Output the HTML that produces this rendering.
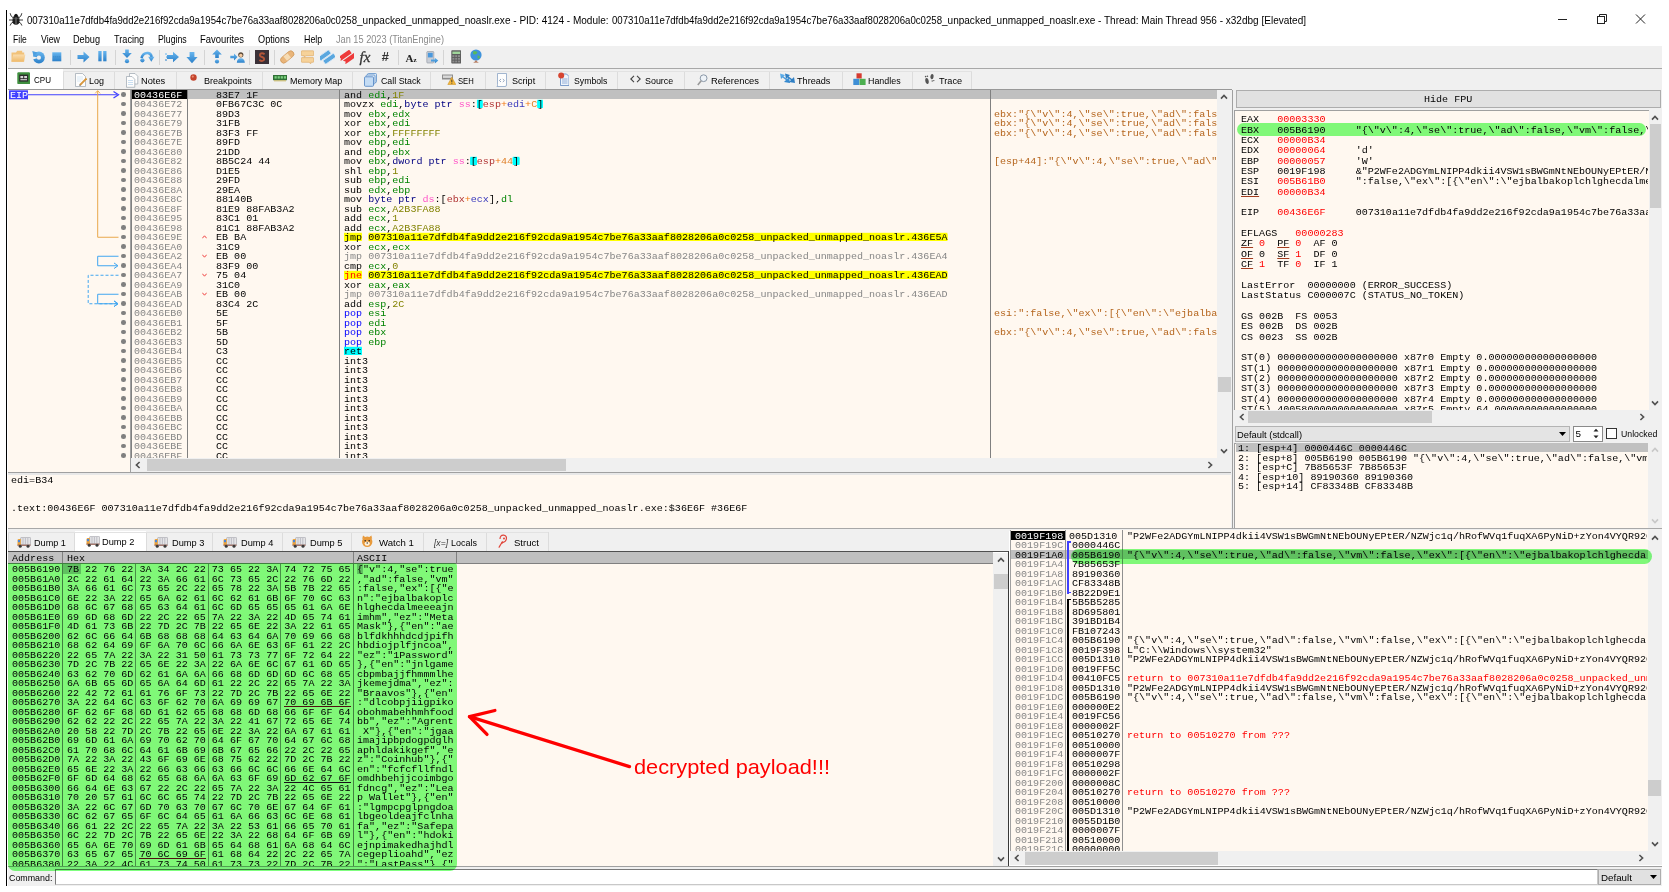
<!DOCTYPE html>
<html><head><meta charset="utf-8"><title>x32dbg</title>
<style>
html,body{margin:0;padding:0;background:#fff;}
body{width:1669px;height:892px;overflow:hidden;position:relative;font-family:"Liberation Sans",sans-serif;}
div,span.s,span.m,svg{position:absolute;}
i{font-style:normal;}
.s{font-family:"Liberation Sans",sans-serif;white-space:pre;height:14px;line-height:14px;transform-origin:0 50%;}
.m{font-family:"Liberation Mono",monospace;font-size:9.0px;white-space:pre;height:9.5px;line-height:9.5px;transform:scaleX(1.11741);transform-origin:0 0;}
.m i{display:inline-block;height:9.5px;line-height:9.5px;vertical-align:top;}
.clip{overflow:hidden;}
</style></head><body>
<div style="left:6px;top:10px;width:1px;height:876px;background:#000;"></div>
<div style="left:8px;top:46px;width:1653.5px;height:22px;background:#f0f0f0;"></div>
<div style="left:8px;top:68px;width:1653.5px;height:1px;background:#a8a8a8;"></div>
<div style="left:8px;top:69px;width:1653.5px;height:20.7px;background:#f0f0f0;"></div>
<svg style="left:8.5px;top:12.3px" width="14" height="14" viewBox="0 0 14 14">
<g stroke="#3a3a3a" stroke-width="1" fill="none" stroke-linecap="round">
<path d="M3.8,5.6 Q1.6,4.6 1.2,1.6 M10.2,5.6 Q12.4,4.6 12.8,1.6 M3.4,8 H0.4 M10.6,8 H13.6 M3.8,10.2 Q1.8,10.8 1.2,13.2 M10.2,10.2 Q12.2,10.8 12.8,13.2"/></g>
<ellipse cx="7" cy="8.4" rx="3.6" ry="4.3" fill="#1d1d1d"/>
<path d="M4.4,4.8 Q7,-1.2 9.6,4.8 Z" fill="#111"/>
<rect x="6.55" y="5.2" width="0.9" height="7" fill="#8a8a8a"/>
<path d="M4,6.4 H10" stroke="#666" stroke-width="0.6"/>
</svg>
<span class="s" style="left:27px;top:12.5px;font-size:11px;color:#000;transform:scaleX(0.8763);">007310a11e7dfdb4fa9dd2e216f92cda9a1954c7be76a33aaf8028206a0c0258</span>
<span class="s" style="left:357.3px;top:12.5px;font-size:11px;color:#000;transform:scaleX(0.9124);">_unpacked_unmapped_noaslr.exe - PID: 4124 - Module: </span>
<span class="s" style="left:611.7px;top:12.5px;font-size:11px;color:#000;transform:scaleX(0.8763);">007310a11e7dfdb4fa9dd2e216f92cda9a1954c7be76a33aaf8028206a0c0258</span>
<span class="s" style="left:942px;top:12.5px;font-size:11px;color:#000;transform:scaleX(0.9111);">_unpacked_unmapped_noaslr.exe - Thread: Main Thread 956 - x32dbg [Elevated]</span>
<svg style="left:1550px;top:8px" width="105" height="24" viewBox="0 0 105 24">
<g stroke="#222" stroke-width="1" fill="none">
<path d="M8,11.5 H17"/>
<rect x="47.5" y="8.5" width="7" height="7"/><path d="M49.5,8.5 V6.5 H56.5 V13.5 H54.5"/>
<path d="M86,6.5 L95,15.5 M95,6.5 L86,15.5"/>
</g></svg>
<span class="s" style="left:13.1px;top:32px;font-size:10.8px;color:#000;transform:scaleX(0.7930);">File</span>
<span class="s" style="left:41px;top:32px;font-size:10.8px;color:#000;transform:scaleX(0.8142);">View</span>
<span class="s" style="left:73.2px;top:32px;font-size:10.8px;color:#000;transform:scaleX(0.8484);">Debug</span>
<span class="s" style="left:114px;top:32px;font-size:10.8px;color:#000;transform:scaleX(0.8481);">Tracing</span>
<span class="s" style="left:157.8px;top:32px;font-size:10.8px;color:#000;transform:scaleX(0.8103);">Plugins</span>
<span class="s" style="left:200px;top:32px;font-size:10.8px;color:#000;transform:scaleX(0.8727);">Favourites</span>
<span class="s" style="left:258.2px;top:32px;font-size:10.8px;color:#000;transform:scaleX(0.8517);">Options</span>
<span class="s" style="left:303.5px;top:32px;font-size:10.8px;color:#000;transform:scaleX(0.8239);">Help</span>
<span class="s" style="left:336px;top:32px;font-size:10.8px;color:#8a8a8a;transform:scaleX(0.8512);">Jan 15 2023 (TitanEngine)</span>
<div style="left:69.9px;top:49.5px;width:1px;height:15px;background:#d4d4d4;"></div>
<div style="left:114.8px;top:49.5px;width:1px;height:15px;background:#d4d4d4;"></div>
<div style="left:159.1px;top:49.5px;width:1px;height:15px;background:#d4d4d4;"></div>
<div style="left:204px;top:49.5px;width:1px;height:15px;background:#d4d4d4;"></div>
<div style="left:249px;top:49.5px;width:1px;height:15px;background:#d4d4d4;"></div>
<div style="left:273.8px;top:49.5px;width:1px;height:15px;background:#d4d4d4;"></div>
<div style="left:397.9px;top:49.5px;width:1px;height:15px;background:#d4d4d4;"></div>
<div style="left:442.8px;top:49.5px;width:1px;height:15px;background:#d4d4d4;"></div>
<div style="left:8px;top:69px;width:55px;height:21px;background:#fff;"></div>
<div style="left:62.5px;top:71px;width:1px;height:18px;background:#dcdcdc;"></div>
<div style="left:113.5px;top:71px;width:1px;height:18px;background:#dcdcdc;"></div>
<div style="left:176.3px;top:71px;width:1px;height:18px;background:#dcdcdc;"></div>
<div style="left:262.2px;top:71px;width:1px;height:18px;background:#dcdcdc;"></div>
<div style="left:352.4px;top:71px;width:1px;height:18px;background:#dcdcdc;"></div>
<div style="left:430px;top:71px;width:1px;height:18px;background:#dcdcdc;"></div>
<div style="left:484.5px;top:71px;width:1px;height:18px;background:#dcdcdc;"></div>
<div style="left:545.3px;top:71px;width:1px;height:18px;background:#dcdcdc;"></div>
<div style="left:617px;top:71px;width:1px;height:18px;background:#dcdcdc;"></div>
<div style="left:683.7px;top:71px;width:1px;height:18px;background:#dcdcdc;"></div>
<div style="left:768.5px;top:71px;width:1px;height:18px;background:#dcdcdc;"></div>
<div style="left:841.5px;top:71px;width:1px;height:18px;background:#dcdcdc;"></div>
<div style="left:911.5px;top:71px;width:1px;height:18px;background:#dcdcdc;"></div>
<div style="left:971.1px;top:71px;width:1px;height:18px;background:#dcdcdc;"></div>
<div style="left:63px;top:70.5px;width:908.6px;height:1px;background:#e2e2e2;"></div>
<span class="s" style="left:34px;top:73px;font-size:9.9px;color:#000;transform:scaleX(0.8133);">CPU</span>
<span class="s" style="left:89px;top:74px;font-size:9.9px;color:#000;transform:scaleX(0.9082);">Log</span>
<span class="s" style="left:141.4px;top:74px;font-size:9.9px;color:#000;transform:scaleX(0.9397);">Notes</span>
<span class="s" style="left:203.7px;top:74px;font-size:9.9px;color:#000;transform:scaleX(0.9163);">Breakpoints</span>
<span class="s" style="left:290px;top:74px;font-size:9.9px;color:#000;transform:scaleX(0.9072);">Memory Map</span>
<span class="s" style="left:380.5px;top:74px;font-size:9.9px;color:#000;transform:scaleX(0.8931);">Call Stack</span>
<span class="s" style="left:458.4px;top:74px;font-size:9.9px;color:#000;transform:scaleX(0.7762);">SEH</span>
<span class="s" style="left:512.3px;top:74px;font-size:9.9px;color:#000;transform:scaleX(0.9168);">Script</span>
<span class="s" style="left:574px;top:74px;font-size:9.9px;color:#000;transform:scaleX(0.8825);">Symbols</span>
<span class="s" style="left:645.2px;top:74px;font-size:9.9px;color:#000;transform:scaleX(0.9023);">Source</span>
<span class="s" style="left:711.4px;top:74px;font-size:9.9px;color:#000;transform:scaleX(0.9502);">References</span>
<span class="s" style="left:797px;top:74px;font-size:9.9px;color:#000;transform:scaleX(0.9225);">Threads</span>
<span class="s" style="left:868.3px;top:74px;font-size:9.9px;color:#000;transform:scaleX(0.9003);">Handles</span>
<span class="s" style="left:939.4px;top:74px;font-size:9.9px;color:#000;transform:scaleX(0.9263);">Trace</span>
<svg width="0" height="0" style="left:0;top:0"><defs><linearGradient id="gb" x1="0" y1="0" x2="0" y2="1"><stop offset="0" stop-color="#68b6ef"/><stop offset="1" stop-color="#2b80c9"/></linearGradient><linearGradient id="gf" x1="0" y1="0" x2="0" y2="1"><stop offset="0" stop-color="#f9dcae"/><stop offset="1" stop-color="#efb968"/></linearGradient></defs></svg>
<svg style="left:11px;top:50.2px" width="15" height="13" viewBox="0 0 15 13"><path d="M0.5,2.6 H5 L6.2,0.8 H11.2 V2.6 H13.2 V11.6 H0.5 Z" fill="#f1c27a"/><path d="M0.4,11.8 L2.2,4.6 H14.4 L12.8,11.8 Z" fill="url(#gf)"/></svg>
<svg style="left:31.5px;top:49.7px" width="13" height="14" viewBox="0 0 13 14"><circle cx="6.9" cy="7.5" r="5.9" fill="url(#gb)"/><circle cx="6.9" cy="7.7" r="2.1" fill="#f0f0f0"/><path d="M6.9,7.7 L0,6.2 L0.6,9.4 Z" fill="#f0f0f0"/><path d="M0.3,1 L5.4,2.4 L1.6,6.8 Z" fill="#4d9fe0"/></svg>
<svg style="left:52.3px;top:51.8px" width="10" height="10" viewBox="0 0 10 10"><rect x="0.3" y="0.3" width="9" height="9" fill="url(#gb)"/><path d="M1.3,4.8 H8.3" stroke="#2b7cbd" stroke-width="0.8" stroke-dasharray="1,1"/></svg>
<svg style="left:76.5px;top:50.7px" width="13" height="12" viewBox="0 0 13 12"><path d="M0.5,4 H6.5 V0.5 L12.5,6 L6.5,11.5 V8 H0.5 Z" fill="url(#gb)"/></svg>
<svg style="left:97.5px;top:51.2px" width="9" height="10.5" viewBox="0 0 9 10.5"><rect x="0.3" y="0" width="3.3" height="10.3" fill="url(#gb)"/><rect x="5.2" y="0" width="3.3" height="10.3" fill="url(#gb)"/></svg>
<svg style="left:122px;top:49.2px" width="10" height="15" viewBox="0 0 10 15"><path d="M3.2,0.5 H6.8 V4 H9.8 L5,9 L0.2,4 H3.2 Z" fill="url(#gb)"/><circle cx="5" cy="12.2" r="2.1" fill="url(#gb)"/></svg>
<svg style="left:140px;top:51.2px" width="14.5" height="11.5" viewBox="0 0 14.5 11.5"><path d="M1.5,7 Q3,1.5 8,2 Q11.5,2.6 11.5,6" fill="none" stroke="url(#gb)" stroke-width="2.6"/><path d="M8.2,5.8 H14.4 L11.3,10.8 Z" fill="url(#gb)"/><circle cx="2.4" cy="9.3" r="2.1" fill="url(#gb)"/></svg>
<svg style="left:165px;top:50.7px" width="14.5" height="12" viewBox="0 0 14.5 12"><path d="M2,4 H8 V0.8 L14,6 L8,11.2 V8 H2 Z" fill="url(#gb)"/><path d="M0,3 h2 M1,6 h2 M0,9 h2" stroke="url(#gb)" stroke-width="1"/></svg>
<svg style="left:186px;top:49.7px" width="12" height="14" viewBox="0 0 12 14"><path d="M3.6,2 H8.4 V7 H11.6 L6,13.2 L0.4,7 H3.6 Z" fill="url(#gb)"/><path d="M4,0.5 h1.5 M7,0.5 h1.5" stroke="url(#gb)" stroke-width="1"/></svg>
<svg style="left:211.5px;top:49.2px" width="10" height="15" viewBox="0 0 10 15"><path d="M3.2,9 H6.8 V5.5 H9.8 L5,0.5 L0.2,5.5 H3.2 Z" fill="url(#gb)"/><circle cx="5" cy="12.5" r="2.1" fill="url(#gb)"/></svg>
<svg style="left:229.5px;top:50.7px" width="15" height="12" viewBox="0 0 15 12"><path d="M0.3,4.8 H4 V2.5 L7.5,6 L4,9.5 V7.2 H0.3 Z" fill="url(#gb)"/><circle cx="10.8" cy="3.8" r="2.6" fill="#5b4a3a"/><circle cx="10.8" cy="4.4" r="1.7" fill="#f3c9a0"/><path d="M6.8,11.8 Q7,7.3 10.8,7.3 Q14.6,7.3 14.8,11.8 Z" fill="url(#gb)"/></svg>
<svg style="left:255px;top:49.7px" width="14.2" height="14" viewBox="0 0 14.2 14"><rect width="14.2" height="14" fill="#3b3138"/><path d="M9.6,4.2 Q7,2.2 5.2,4 Q4,6 7,7 Q10,8 8.8,10.2 Q7,12 4.4,10" fill="none" stroke="#b4553a" stroke-width="1.9"/></svg>
<svg style="left:280px;top:49.7px" width="14.5" height="14" viewBox="0 0 14.5 14"><g transform="rotate(-40 7.2 7)"><rect x="-0.5" y="3.8" width="15.5" height="6.4" rx="3.2" fill="#e9b57a" stroke="#c98f4f" stroke-width="0.6"/><rect x="4.6" y="4.2" width="5.2" height="5.6" fill="#f6dcb5"/></g></svg>
<svg style="left:300.5px;top:49.7px" width="13" height="14" viewBox="0 0 13 14"><path d="M1,0.8 H12 Q12.7,0.8 12.7,1.5 V5 Q12.7,5.7 12,5.7 H5 L3.2,7.2 V5.7 H1 Q0.3,5.7 0.3,5 V1.5 Q0.3,0.8 1,0.8 Z" fill="#f6d29a" stroke="#dca55a" stroke-width="0.6"/><path d="M1,7.6 H12 Q12.7,7.6 12.7,8.3 V11.6 Q12.7,12.3 12,12.3 H9.8 V13.8 L8,12.3 H1 Q0.3,12.3 0.3,11.6 V8.3 Q0.3,7.6 1,7.6 Z" fill="#f6d29a" stroke="#dca55a" stroke-width="0.6"/></svg>
<svg style="left:320px;top:49.7px" width="14.5" height="14" viewBox="0 0 14.5 14"><g transform="rotate(-35 7 7)"><rect x="-0.5" y="2" width="13" height="4.6" rx="1" fill="#5aa7df" stroke="#d7e7f5" stroke-width="0.9"/><rect x="1.5" y="7.6" width="13" height="4.6" rx="1" fill="#5aa7df" stroke="#d7e7f5" stroke-width="0.9"/></g></svg>
<svg style="left:339.5px;top:49.7px" width="14.5" height="14" viewBox="0 0 14.5 14"><g transform="rotate(-35 7 7)"><path d="M-0.5,2.2 H13 V6.6 H-0.5 L1.3,4.4 Z" fill="#ee3b3b"/><path d="M1.5,7.6 H15 V12 H1.5 L3.3,9.8 Z" fill="#ee3b3b"/></g></svg>
<span class="s" style="left:359.5px;top:48.7px;font-family:'Liberation Serif',serif;font-style:italic;font-size:15px;color:#333;height:16px;line-height:16px;-webkit-text-stroke:0.3px">fx</span>
<span class="s" style="left:381.5px;top:49.2px;font-family:'Liberation Sans',sans-serif;font-style:italic;font-weight:bold;font-size:13px;color:#333;height:16px;line-height:16px;">#</span>
<span class="s" style="left:405.5px;top:49.7px;font-family:'Liberation Serif',serif;font-weight:bold;font-size:11px;color:#222;height:16px;line-height:16px;">A<i style="font-size:7px">z</i></span>
<svg style="left:426px;top:49.7px" width="12.5" height="14" viewBox="0 0 12.5 14"><rect x="0.8" y="1.5" width="7" height="11.5" rx="0.8" fill="#c9ced6" stroke="#8d949e" stroke-width="0.6"/><rect x="1.9" y="2.8" width="4.8" height="4.6" fill="#4a98dc"/><path d="M5,9.6 H8.8 V7.8 L12.3,10.6 L8.8,13.4 V11.6 H5 Z" fill="url(#gb)"/></svg>
<svg style="left:450.5px;top:49.7px" width="10.5" height="14" viewBox="0 0 10.5 14"><rect x="0.3" y="0.3" width="9.9" height="13.2" rx="0.8" fill="#5d5d5d"/><rect x="1.4" y="1.6" width="7.7" height="2.4" fill="#9fd59a"/><g fill="#8d8d8d"><rect x="1.4" y="5.2" width="2" height="1.8"/><rect x="4.2" y="5.2" width="2" height="1.8"/><rect x="7" y="5.2" width="2" height="1.8"/><rect x="1.4" y="7.9" width="2" height="1.8"/><rect x="4.2" y="7.9" width="2" height="1.8"/><rect x="7" y="7.9" width="2" height="1.8"/><rect x="1.4" y="10.6" width="2" height="1.8"/><rect x="4.2" y="10.6" width="2" height="1.8"/><rect x="7" y="10.6" width="2" height="1.8"/></g></svg>
<svg style="left:470px;top:49.2px" width="12.5" height="15" viewBox="0 0 12.5 15"><circle cx="6" cy="6" r="5.6" fill="#3f93dc"/><path d="M3,2.5 Q6,1 7.5,3.5 Q6,6 4.5,5.5 Q2.5,5 3,2.5 Z M7.5,6.5 Q10,6 10,8.5 Q8.5,10.5 7.5,9 Z" fill="#59b95b"/><path d="M3.2,13.6 Q6,11.6 8.8,13.6 Z" fill="#a0522d"/><rect x="5.5" y="11.4" width="1" height="1.6" fill="#a0522d"/></svg>
<svg style="left:16.5px;top:71.5px" width="13.5" height="12.5" viewBox="0 0 13.5 12.5"><rect x="0.3" y="0.3" width="12.9" height="11.9" rx="1.2" fill="#3f8f3f"/><rect x="2.2" y="2.6" width="9" height="7" fill="#2c2c2c"/><rect x="3.4" y="4" width="2.8" height="2.2" fill="#d8d8d8"/><rect x="7.2" y="4" width="2.8" height="2.2" fill="#d8d8d8"/><rect x="3.4" y="7" width="6.6" height="1.3" fill="#bdbdbd"/></svg>
<svg style="left:74.5px;top:73px" width="12" height="14" viewBox="0 0 12 14"><path d="M0.5,0.5 H7.5 L10.5,3.5 V13.5 H0.5 Z" fill="#fdfdfd" stroke="#9aa3ad" stroke-width="0.7"/><path d="M2,4 H8 M2,6 H8 M2,8 H6" stroke="#cfe3f3" stroke-width="0.8"/><path d="M5,12 L11.5,5.5" stroke="#d8973c" stroke-width="1.8"/><path d="M4.3,12.8 L5.8,12.4 L4.7,11.3 Z" fill="#444"/></svg>
<svg style="left:126px;top:72.5px" width="12.5" height="15" viewBox="0 0 12.5 15"><path d="M3.5,0.5 H9 L11.8,3.3 V11 H3.5 Z" fill="#fdfdfd" stroke="#9aa3ad" stroke-width="0.7"/><path d="M0.5,3.5 H6 L8.8,6.3 V14.3 H0.5 Z" fill="#fdfdfd" stroke="#9aa3ad" stroke-width="0.7"/><path d="M2,7.5 H7 M2,9.5 H7 M2,11.5 H7" stroke="#bcd7ee" stroke-width="0.8"/></svg>
<svg style="left:189.5px;top:73.5px" width="7" height="7" viewBox="0 0 7 7"><circle cx="3.5" cy="3.5" r="3.2" fill="#c4432b"/><circle cx="2.8" cy="2.6" r="1.1" fill="#e88a6e"/></svg>
<svg style="left:273px;top:75px" width="14" height="6.5" viewBox="0 0 14 6.5"><rect x="0" y="0" width="14" height="5.2" fill="#2f6f35"/><g fill="#7bd07f"><rect x="1.5" y="1.2" width="2.2" height="2.4"/><rect x="4.6" y="1.2" width="2.2" height="2.4"/><rect x="7.7" y="1.2" width="2.2" height="2.4"/><rect x="10.8" y="1.2" width="2.2" height="2.4"/></g><path d="M1,5.8 H13" stroke="#c8b560" stroke-width="1"/></svg>
<svg style="left:363.5px;top:72.5px" width="13" height="14" viewBox="0 0 13 14"><rect x="3.5" y="0.5" width="9" height="9" rx="1" fill="#dce9f7" stroke="#5d8fc9" stroke-width="0.8"/><rect x="2" y="2" width="9" height="9" rx="1" fill="#dce9f7" stroke="#5d8fc9" stroke-width="0.8"/><rect x="0.5" y="3.8" width="9" height="9.5" rx="1" fill="#c4dcf4" stroke="#4d82c2" stroke-width="0.8"/></svg>
<svg style="left:441.5px;top:74px" width="14" height="11" viewBox="0 0 14 11"><rect x="0" y="0.5" width="11" height="5" fill="#8d8d8d"/><rect x="1" y="1.5" width="9" height="2.4" fill="#d9d9d9"/><path d="M9.8,3.2 L13.8,10.5 H5.8 Z" fill="#f4b73a" stroke="#c88a17" stroke-width="0.5"/><rect x="9.4" y="5.6" width="0.9" height="2.6" fill="#333"/><rect x="9.4" y="8.8" width="0.9" height="0.9" fill="#333"/></svg>
<svg style="left:496px;top:72.5px" width="11.5" height="14" viewBox="0 0 11.5 14"><path d="M1.5,0.5 H10.5 V12 Q10.5,13.5 9,13.5 H0.8 Q2,13 1.5,11.5 Z" fill="#fdfdfd" stroke="#8aa3c4" stroke-width="0.8"/><path d="M5,6 L3.4,7.5 L5,9 M6.8,6 L8.4,7.5 L6.8,9" fill="none" stroke="#7a8fb0" stroke-width="0.8"/></svg>
<svg style="left:557.5px;top:72px" width="11.5" height="14" viewBox="0 0 11.5 14"><path d="M2.5,2 H8.5 L11,4.5 V13.5 H2.5 Z" fill="#eef4fb" stroke="#5f86c0" stroke-width="0.8"/><path d="M4,7 H9.5 M4,9 H9.5 M4,11 H9.5" stroke="#7fa0d0" stroke-width="0.8"/><circle cx="3.2" cy="3.6" r="3" fill="#d64532"/></svg>
<svg style="left:630px;top:74.5px" width="11" height="8" viewBox="0 0 11 8"><path d="M4,0.8 L0.8,4 L4,7.2 M7,0.8 L10.2,4 L7,7.2" fill="none" stroke="#444" stroke-width="1.1"/></svg>
<svg style="left:696.5px;top:73.5px" width="11" height="12" viewBox="0 0 11 12"><circle cx="6.6" cy="4.2" r="3.4" fill="#eef3f8" stroke="#8a97a6" stroke-width="1"/><path d="M4.2,6.8 L0.8,11" stroke="#9a9a9a" stroke-width="1.6"/></svg>
<svg style="left:779.5px;top:72.5px" width="15.5" height="11" viewBox="0 0 15.5 11"><path d="M0,0.5 L5,2 L3.5,3.5 L7,6 L9,4 L10,10 L4,9 L6,7 L2.5,4.5 L1,6 Z" fill="url(#gb)"/><path d="M5,0.5 L10,2 L8.5,3.5 L12,6 L14,4 L15,10 L9,9 L11,7 L7.5,4.5 L6,6 Z" fill="#2f7fc4"/></svg>
<svg style="left:852.5px;top:72.5px" width="13" height="13" viewBox="0 0 13 13"><rect x="3.5" y="0.3" width="5.2" height="5.2" fill="#d63a2f"/><rect x="0.3" y="5.8" width="6" height="6.2" fill="#3f8fd6"/><rect x="6.6" y="5.8" width="6" height="6.2" fill="#4caf50"/></svg>
<svg style="left:924px;top:72.5px" width="11.5" height="13" viewBox="0 0 11.5 13"><ellipse cx="3" cy="8" rx="1.7" ry="3" fill="#555" transform="rotate(-10 3 8)"/><ellipse cx="8" cy="3.6" rx="1.6" ry="2.7" fill="#555" transform="rotate(10 8 3.6)"/><circle cx="1.6" cy="3.6" r="0.8" fill="#555"/><circle cx="3.4" cy="3.2" r="0.8" fill="#555"/><circle cx="9.8" cy="7.6" r="0.7" fill="#555"/><circle cx="8.2" cy="8" r="0.7" fill="#555"/></svg>
<div style="left:8px;top:89.7px;width:121.5px;height:382.5px;background:#fff8f0;"></div>
<div style="left:129.5px;top:89.7px;width:1.5px;height:382.5px;background:#a0a0a0;"></div>
<div style="left:131px;top:89.7px;width:1087px;height:368.5px;background:#fff8f0;"></div>
<div style="left:8px;top:89.1px;width:1224px;height:0.8px;background:#989898;"></div>
<div style="left:131px;top:89.7px;width:1087px;height:9.5px;background:#c0c0c0;"></div>
<div style="left:132px;top:89.7px;width:55.5px;height:9.5px;background:#000;"></div>
<div style="left:187px;top:89.7px;width:1px;height:368.5px;background:#808080;"></div>
<div style="left:339px;top:89.7px;width:1px;height:368.5px;background:#808080;"></div>
<div style="left:990px;top:89.7px;width:1px;height:368.5px;background:#808080;"></div>
<div style="left:131px;top:89.7px;width:1px;height:368.5px;background:#808080;"></div>
<div class="clip" style="left:0px;top:89.7px;width:1217px;height:368.3px">
<div style="left:121px;top:2.65px;width:4.6px;height:4.6px;border-radius:50%;background:#808080"></div>
<span class="m" style="left:134.2px;top:2.3px;color:#fff;">00436E6F</span>
<span class="m" style="left:216px;top:2.3px;color:#000;">83E7 1F</span>
<span class="m" style="left:343.6px;top:2.3px;">and <i style="color:#008300;">edi</i>,<i style="color:#828200;">1F</i></span>
<div style="left:121px;top:12.15px;width:4.6px;height:4.6px;border-radius:50%;background:#808080"></div>
<span class="m" style="left:134.2px;top:11.3px;color:#868686;">00436E72</span>
<span class="m" style="left:216px;top:11.3px;color:#000;">0FB67C3C 0C</span>
<span class="m" style="left:343.6px;top:11.3px;">movzx <i style="color:#008300;">edi</i>,<i style="color:#000080;">byte ptr </i><i style="color:#ff55c8;">ss</i>:<i style="color:#000;background:#00ffff;box-shadow:0 -1.2px 0 #00ffff;height:7.2px;">[</i><i style="color:#b03434;">esp</i><i style="color:#f27711;">+</i><i style="color:#3838bc;">edi</i><i style="color:#f27711;">+</i><i style="color:#e0802a;">C</i><i style="color:#000;background:#00ffff;box-shadow:0 -1.2px 0 #00ffff;height:7.2px;">]</i></span>
<div style="left:121px;top:21.65px;width:4.6px;height:4.6px;border-radius:50%;background:#808080"></div>
<span class="m" style="left:134.2px;top:21.3px;color:#868686;">00436E77</span>
<span class="m" style="left:216px;top:21.3px;color:#000;">89D3</span>
<span class="m" style="left:343.6px;top:21.3px;">mov <i style="color:#008300;">ebx</i>,<i style="color:#008300;">edx</i></span>
<span class="m" style="left:993.6px;top:21.3px;color:#b5651d;">ebx:"{\"v\":4,\"se\":true,\"ad\":false,\"vm\"</span>
<div style="left:121px;top:31.15px;width:4.6px;height:4.6px;border-radius:50%;background:#808080"></div>
<span class="m" style="left:134.2px;top:30.3px;color:#868686;">00436E79</span>
<span class="m" style="left:216px;top:30.3px;color:#000;">31FB</span>
<span class="m" style="left:343.6px;top:30.3px;">xor <i style="color:#008300;">ebx</i>,<i style="color:#008300;">edi</i></span>
<span class="m" style="left:993.6px;top:30.3px;color:#b5651d;">ebx:"{\"v\":4,\"se\":true,\"ad\":false,\"vm\"</span>
<div style="left:121px;top:40.65px;width:4.6px;height:4.6px;border-radius:50%;background:#808080"></div>
<span class="m" style="left:134.2px;top:40.3px;color:#868686;">00436E7B</span>
<span class="m" style="left:216px;top:40.3px;color:#000;">83F3 FF</span>
<span class="m" style="left:343.6px;top:40.3px;">xor <i style="color:#008300;">ebx</i>,<i style="color:#828200;">FFFFFFFF</i></span>
<span class="m" style="left:993.6px;top:40.3px;color:#b5651d;">ebx:"{\"v\":4,\"se\":true,\"ad\":false,\"vm\"</span>
<div style="left:121px;top:50.15px;width:4.6px;height:4.6px;border-radius:50%;background:#808080"></div>
<span class="m" style="left:134.2px;top:49.3px;color:#868686;">00436E7E</span>
<span class="m" style="left:216px;top:49.3px;color:#000;">89FD</span>
<span class="m" style="left:343.6px;top:49.3px;">mov <i style="color:#008300;">ebp</i>,<i style="color:#008300;">edi</i></span>
<div style="left:121px;top:59.65px;width:4.6px;height:4.6px;border-radius:50%;background:#808080"></div>
<span class="m" style="left:134.2px;top:59.3px;color:#868686;">00436E80</span>
<span class="m" style="left:216px;top:59.3px;color:#000;">21DD</span>
<span class="m" style="left:343.6px;top:59.3px;">and <i style="color:#008300;">ebp</i>,<i style="color:#008300;">ebx</i></span>
<div style="left:121px;top:69.15px;width:4.6px;height:4.6px;border-radius:50%;background:#808080"></div>
<span class="m" style="left:134.2px;top:68.3px;color:#868686;">00436E82</span>
<span class="m" style="left:216px;top:68.3px;color:#000;">8B5C24 44</span>
<span class="m" style="left:343.6px;top:68.3px;">mov <i style="color:#008300;">ebx</i>,<i style="color:#000080;">dword ptr </i><i style="color:#ff55c8;">ss</i>:<i style="color:#000;background:#00ffff;box-shadow:0 -1.2px 0 #00ffff;height:7.2px;">[</i><i style="color:#b03434;">esp</i><i style="color:#f27711;">+</i><i style="color:#e0802a;">44</i><i style="color:#000;background:#00ffff;box-shadow:0 -1.2px 0 #00ffff;height:7.2px;">]</i></span>
<span class="m" style="left:993.6px;top:68.3px;color:#b5651d;">[esp+44]:"{\"v\":4,\"se\":true,\"ad\":false</span>
<div style="left:121px;top:78.65px;width:4.6px;height:4.6px;border-radius:50%;background:#808080"></div>
<span class="m" style="left:134.2px;top:78.3px;color:#868686;">00436E86</span>
<span class="m" style="left:216px;top:78.3px;color:#000;">D1E5</span>
<span class="m" style="left:343.6px;top:78.3px;">shl <i style="color:#008300;">ebp</i>,<i style="color:#828200;">1</i></span>
<div style="left:121px;top:88.15px;width:4.6px;height:4.6px;border-radius:50%;background:#808080"></div>
<span class="m" style="left:134.2px;top:87.3px;color:#868686;">00436E88</span>
<span class="m" style="left:216px;top:87.3px;color:#000;">29FD</span>
<span class="m" style="left:343.6px;top:87.3px;">sub <i style="color:#008300;">ebp</i>,<i style="color:#008300;">edi</i></span>
<div style="left:121px;top:97.65px;width:4.6px;height:4.6px;border-radius:50%;background:#808080"></div>
<span class="m" style="left:134.2px;top:97.3px;color:#868686;">00436E8A</span>
<span class="m" style="left:216px;top:97.3px;color:#000;">29EA</span>
<span class="m" style="left:343.6px;top:97.3px;">sub <i style="color:#008300;">edx</i>,<i style="color:#008300;">ebp</i></span>
<div style="left:121px;top:107.15px;width:4.6px;height:4.6px;border-radius:50%;background:#808080"></div>
<span class="m" style="left:134.2px;top:106.3px;color:#868686;">00436E8C</span>
<span class="m" style="left:216px;top:106.3px;color:#000;">88140B</span>
<span class="m" style="left:343.6px;top:106.3px;">mov <i style="color:#000080;">byte ptr </i><i style="color:#ff55c8;">ds</i>:[<i style="color:#b03434;">ebx</i><i style="color:#f27711;">+</i><i style="color:#3838bc;">ecx</i>],<i style="color:#008300;">dl</i></span>
<div style="left:121px;top:116.65px;width:4.6px;height:4.6px;border-radius:50%;background:#808080"></div>
<span class="m" style="left:134.2px;top:116.3px;color:#868686;">00436E8F</span>
<span class="m" style="left:216px;top:116.3px;color:#000;">81E9 88FAB3A2</span>
<span class="m" style="left:343.6px;top:116.3px;">sub <i style="color:#008300;">ecx</i>,<i style="color:#828200;">A2B3FA88</i></span>
<div style="left:121px;top:126.15px;width:4.6px;height:4.6px;border-radius:50%;background:#808080"></div>
<span class="m" style="left:134.2px;top:125.3px;color:#868686;">00436E95</span>
<span class="m" style="left:216px;top:125.3px;color:#000;">83C1 01</span>
<span class="m" style="left:343.6px;top:125.3px;">add <i style="color:#008300;">ecx</i>,<i style="color:#828200;">1</i></span>
<div style="left:121px;top:135.65px;width:4.6px;height:4.6px;border-radius:50%;background:#808080"></div>
<span class="m" style="left:134.2px;top:135.3px;color:#868686;">00436E98</span>
<span class="m" style="left:216px;top:135.3px;color:#000;">81C1 88FAB3A2</span>
<span class="m" style="left:343.6px;top:135.3px;">add <i style="color:#008300;">ecx</i>,<i style="color:#828200;">A2B3FA88</i></span>
<div style="left:121px;top:145.15px;width:4.6px;height:4.6px;border-radius:50%;background:#808080"></div>
<span class="m" style="left:134.2px;top:144.3px;color:#868686;">00436E9E</span>
<svg style="left:201.5px;top:145.5px" width="5" height="4" viewBox="0 0 5 4"><path d="M0.3,3.3 L2.5,0.8 L4.7,3.3" fill="none" stroke="#ee3030" stroke-width="0.9"/></svg>
<span class="m" style="left:216px;top:144.3px;color:#000;">EB BA</span>
<span class="m" style="left:343.6px;top:144.3px;"><i style="color:#000;background:#ffff00;box-shadow:0 -1.2px 0 #ffff00;height:7.2px;">jmp</i> <i style="color:#000;background:#ffff00;box-shadow:0 -1.2px 0 #ffff00;height:7.2px;">007310a11e7dfdb4fa9dd2e216f92cda9a1954c7be76a33aaf8028206a0c0258_unpacked_unmapped_noaslr.436E5A</i></span>
<div style="left:121px;top:154.65px;width:4.6px;height:4.6px;border-radius:50%;background:#808080"></div>
<span class="m" style="left:134.2px;top:154.3px;color:#868686;">00436EA0</span>
<span class="m" style="left:216px;top:154.3px;color:#000;">31C9</span>
<span class="m" style="left:343.6px;top:154.3px;">xor <i style="color:#008300;">ecx</i>,<i style="color:#008300;">ecx</i></span>
<div style="left:121px;top:164.15px;width:4.6px;height:4.6px;border-radius:50%;background:#808080"></div>
<span class="m" style="left:134.2px;top:163.3px;color:#868686;">00436EA2</span>
<svg style="left:201.5px;top:164.5px" width="5" height="4" viewBox="0 0 5 4"><path d="M0.3,0.7 L2.5,3.2 L4.7,0.7" fill="none" stroke="#ee3030" stroke-width="0.9"/></svg>
<span class="m" style="left:216px;top:163.3px;color:#000;">EB 00</span>
<span class="m" style="left:343.6px;top:163.3px;"><i style="color:#868686;">jmp 007310a11e7dfdb4fa9dd2e216f92cda9a1954c7be76a33aaf8028206a0c0258_unpacked_unmapped_noaslr.436EA4</i></span>
<div style="left:121px;top:173.65px;width:4.6px;height:4.6px;border-radius:50%;background:#808080"></div>
<span class="m" style="left:134.2px;top:173.3px;color:#868686;">00436EA4</span>
<span class="m" style="left:216px;top:173.3px;color:#000;">83F9 00</span>
<span class="m" style="left:343.6px;top:173.3px;">cmp <i style="color:#008300;">ecx</i>,<i style="color:#828200;">0</i></span>
<div style="left:121px;top:183.15px;width:4.6px;height:4.6px;border-radius:50%;background:#808080"></div>
<span class="m" style="left:134.2px;top:182.3px;color:#868686;">00436EA7</span>
<svg style="left:201.5px;top:183.5px" width="5" height="4" viewBox="0 0 5 4"><path d="M0.3,0.7 L2.5,3.2 L4.7,0.7" fill="none" stroke="#ee3030" stroke-width="0.9"/></svg>
<span class="m" style="left:216px;top:182.3px;color:#000;">75 04</span>
<span class="m" style="left:343.6px;top:182.3px;"><i style="color:#ff0000;background:#ffff00;box-shadow:0 -1.2px 0 #ffff00;height:7.2px;">jne</i> <i style="color:#000;background:#ffff00;box-shadow:0 -1.2px 0 #ffff00;height:7.2px;">007310a11e7dfdb4fa9dd2e216f92cda9a1954c7be76a33aaf8028206a0c0258_unpacked_unmapped_noaslr.436EAD</i></span>
<div style="left:121px;top:192.65px;width:4.6px;height:4.6px;border-radius:50%;background:#808080"></div>
<span class="m" style="left:134.2px;top:192.3px;color:#868686;">00436EA9</span>
<span class="m" style="left:216px;top:192.3px;color:#000;">31C0</span>
<span class="m" style="left:343.6px;top:192.3px;">xor <i style="color:#008300;">eax</i>,<i style="color:#008300;">eax</i></span>
<div style="left:121px;top:202.15px;width:4.6px;height:4.6px;border-radius:50%;background:#808080"></div>
<span class="m" style="left:134.2px;top:201.3px;color:#868686;">00436EAB</span>
<svg style="left:201.5px;top:202.5px" width="5" height="4" viewBox="0 0 5 4"><path d="M0.3,0.7 L2.5,3.2 L4.7,0.7" fill="none" stroke="#ee3030" stroke-width="0.9"/></svg>
<span class="m" style="left:216px;top:201.3px;color:#000;">EB 00</span>
<span class="m" style="left:343.6px;top:201.3px;"><i style="color:#868686;">jmp 007310a11e7dfdb4fa9dd2e216f92cda9a1954c7be76a33aaf8028206a0c0258_unpacked_unmapped_noaslr.436EAD</i></span>
<div style="left:121px;top:211.65px;width:4.6px;height:4.6px;border-radius:50%;background:#808080"></div>
<span class="m" style="left:134.2px;top:211.3px;color:#868686;">00436EAD</span>
<span class="m" style="left:216px;top:211.3px;color:#000;">83C4 2C</span>
<span class="m" style="left:343.6px;top:211.3px;">add <i style="color:#008300;">esp</i>,<i style="color:#828200;">2C</i></span>
<div style="left:121px;top:221.15px;width:4.6px;height:4.6px;border-radius:50%;background:#808080"></div>
<span class="m" style="left:134.2px;top:220.3px;color:#868686;">00436EB0</span>
<span class="m" style="left:216px;top:220.3px;color:#000;">5E</span>
<span class="m" style="left:343.6px;top:220.3px;"><i style="color:#0000ff;">pop</i> <i style="color:#008300;">esi</i></span>
<span class="m" style="left:993.6px;top:220.3px;color:#b5651d;">esi:":false,\"ex\":[{\"en\":\"ejbalbakoplchl</span>
<div style="left:121px;top:230.65px;width:4.6px;height:4.6px;border-radius:50%;background:#808080"></div>
<span class="m" style="left:134.2px;top:230.3px;color:#868686;">00436EB1</span>
<span class="m" style="left:216px;top:230.3px;color:#000;">5F</span>
<span class="m" style="left:343.6px;top:230.3px;"><i style="color:#0000ff;">pop</i> <i style="color:#008300;">edi</i></span>
<div style="left:121px;top:240.15px;width:4.6px;height:4.6px;border-radius:50%;background:#808080"></div>
<span class="m" style="left:134.2px;top:239.3px;color:#868686;">00436EB2</span>
<span class="m" style="left:216px;top:239.3px;color:#000;">5B</span>
<span class="m" style="left:343.6px;top:239.3px;"><i style="color:#0000ff;">pop</i> <i style="color:#008300;">ebx</i></span>
<span class="m" style="left:993.6px;top:239.3px;color:#b5651d;">ebx:"{\"v\":4,\"se\":true,\"ad\":false,\"vm\"</span>
<div style="left:121px;top:249.65px;width:4.6px;height:4.6px;border-radius:50%;background:#808080"></div>
<span class="m" style="left:134.2px;top:249.3px;color:#868686;">00436EB3</span>
<span class="m" style="left:216px;top:249.3px;color:#000;">5D</span>
<span class="m" style="left:343.6px;top:249.3px;"><i style="color:#0000ff;">pop</i> <i style="color:#008300;">ebp</i></span>
<div style="left:121px;top:259.15px;width:4.6px;height:4.6px;border-radius:50%;background:#808080"></div>
<span class="m" style="left:134.2px;top:258.3px;color:#868686;">00436EB4</span>
<span class="m" style="left:216px;top:258.3px;color:#000;">C3</span>
<span class="m" style="left:343.6px;top:258.3px;"><i style="color:#000;background:#00ffff;box-shadow:0 -1.2px 0 #00ffff;height:7.2px;">ret</i></span>
<div style="left:121px;top:268.65px;width:4.6px;height:4.6px;border-radius:50%;background:#808080"></div>
<span class="m" style="left:134.2px;top:268.3px;color:#868686;">00436EB5</span>
<span class="m" style="left:216px;top:268.3px;color:#000;">CC</span>
<span class="m" style="left:343.6px;top:268.3px;">int3</span>
<div style="left:121px;top:278.15px;width:4.6px;height:4.6px;border-radius:50%;background:#808080"></div>
<span class="m" style="left:134.2px;top:277.3px;color:#868686;">00436EB6</span>
<span class="m" style="left:216px;top:277.3px;color:#000;">CC</span>
<span class="m" style="left:343.6px;top:277.3px;">int3</span>
<div style="left:121px;top:287.65px;width:4.6px;height:4.6px;border-radius:50%;background:#808080"></div>
<span class="m" style="left:134.2px;top:287.3px;color:#868686;">00436EB7</span>
<span class="m" style="left:216px;top:287.3px;color:#000;">CC</span>
<span class="m" style="left:343.6px;top:287.3px;">int3</span>
<div style="left:121px;top:297.15px;width:4.6px;height:4.6px;border-radius:50%;background:#808080"></div>
<span class="m" style="left:134.2px;top:296.3px;color:#868686;">00436EB8</span>
<span class="m" style="left:216px;top:296.3px;color:#000;">CC</span>
<span class="m" style="left:343.6px;top:296.3px;">int3</span>
<div style="left:121px;top:306.65px;width:4.6px;height:4.6px;border-radius:50%;background:#808080"></div>
<span class="m" style="left:134.2px;top:306.3px;color:#868686;">00436EB9</span>
<span class="m" style="left:216px;top:306.3px;color:#000;">CC</span>
<span class="m" style="left:343.6px;top:306.3px;">int3</span>
<div style="left:121px;top:316.15px;width:4.6px;height:4.6px;border-radius:50%;background:#808080"></div>
<span class="m" style="left:134.2px;top:315.3px;color:#868686;">00436EBA</span>
<span class="m" style="left:216px;top:315.3px;color:#000;">CC</span>
<span class="m" style="left:343.6px;top:315.3px;">int3</span>
<div style="left:121px;top:325.65px;width:4.6px;height:4.6px;border-radius:50%;background:#808080"></div>
<span class="m" style="left:134.2px;top:325.3px;color:#868686;">00436EBB</span>
<span class="m" style="left:216px;top:325.3px;color:#000;">CC</span>
<span class="m" style="left:343.6px;top:325.3px;">int3</span>
<div style="left:121px;top:335.15px;width:4.6px;height:4.6px;border-radius:50%;background:#808080"></div>
<span class="m" style="left:134.2px;top:334.3px;color:#868686;">00436EBC</span>
<span class="m" style="left:216px;top:334.3px;color:#000;">CC</span>
<span class="m" style="left:343.6px;top:334.3px;">int3</span>
<div style="left:121px;top:344.65px;width:4.6px;height:4.6px;border-radius:50%;background:#808080"></div>
<span class="m" style="left:134.2px;top:344.3px;color:#868686;">00436EBD</span>
<span class="m" style="left:216px;top:344.3px;color:#000;">CC</span>
<span class="m" style="left:343.6px;top:344.3px;">int3</span>
<div style="left:121px;top:354.15px;width:4.6px;height:4.6px;border-radius:50%;background:#808080"></div>
<span class="m" style="left:134.2px;top:353.3px;color:#868686;">00436EBE</span>
<span class="m" style="left:216px;top:353.3px;color:#000;">CC</span>
<span class="m" style="left:343.6px;top:353.3px;">int3</span>
<div style="left:121px;top:363.65px;width:4.6px;height:4.6px;border-radius:50%;background:#808080"></div>
<span class="m" style="left:134.2px;top:363.3px;color:#868686;">00436EBF</span>
<span class="m" style="left:216px;top:363.3px;color:#000;">CC</span>
<span class="m" style="left:343.6px;top:363.3px;">int3</span>
</div>
<svg style="left:8px;top:89.7px" width="122" height="368" viewBox="8 89.7 122 368"><rect x="9" y="90" width="19" height="9" fill="#4040ff"/><path d="M28,94.45 H117" stroke="#4040ff" stroke-width="1.2" fill="none"/><path d="M113.5,91.25 L118.5,94.45 L113.5,97.65" stroke="#4040ff" stroke-width="1.3" fill="none"/><path d="M118.5,236.95 H97.7 V90.7" stroke="#e9a84c" stroke-width="1" fill="none"/><path d="M95.2,93.1 L97.7,90.3 L100.2,93.1" stroke="#e9a84c" stroke-width="0.9" fill="none"/><path d="M118.5,255.95 H97.7 V265.45 H117" stroke="#41a6f0" stroke-width="1" fill="none"/><path d="M114,262.65 L118,265.45 L114,268.25" stroke="#41a6f0" stroke-width="1" fill="none"/><path d="M118.5,274.95 H88.2 V303.45 H117" stroke-dasharray="3,2" stroke="#41a6f0" stroke-width="1" fill="none"/><path d="M114,300.65 L118,303.45 L114,306.25" stroke="#41a6f0" stroke-width="1" fill="none"/><path d="M118.5,293.95 H97.7 V303.45 H117" stroke="#41a6f0" stroke-width="1" fill="none"/><path d="M114,300.65 L118,303.45 L114,306.25" stroke="#41a6f0" stroke-width="1" fill="none"/></svg>
<span class="m" style="left:9.6px;top:92px;color:#fff;">EIP</span>
<div style="left:1217.3px;top:89.7px;width:14px;height:368.5px;background:#f0f0f0;"></div>
<div style="left:1217.8px;top:376.7px;width:13px;height:15px;background:#cdcdcd;"></div>
<svg style="left:1219.3px;top:91.7px" width="10" height="10" viewBox="1219.3 91.7 10 10"><path d="M1221.3,98.3 L1224.3,95.1 L1227.3,98.3" fill="none" stroke="#505050" stroke-width="1.6"/></svg>
<svg style="left:1219.3px;top:446.2px" width="10" height="10" viewBox="1219.3 446.2 10 10"><path d="M1221.3,449.6 L1224.3,452.8 L1227.3,449.6" fill="none" stroke="#505050" stroke-width="1.6"/></svg>
<div style="left:131px;top:458.2px;width:1086.3px;height:13.8px;background:#f0f0f0;"></div>
<div style="left:147.2px;top:458.7px;width:418.8px;height:12.8px;background:#cdcdcd;"></div>
<svg style="left:133px;top:460.1px" width="10" height="10" viewBox="133 460.1 10 10"><path d="M139.6,462.1 L136.4,465.1 L139.6,468.1" fill="none" stroke="#505050" stroke-width="1.6"/></svg>
<svg style="left:1205.3px;top:460.1px" width="10" height="10" viewBox="1205.3 460.1 10 10"><path d="M1208.7,462.1 L1211.9,465.1 L1208.7,468.1" fill="none" stroke="#505050" stroke-width="1.6"/></svg>
<div style="left:1217.3px;top:458.2px;width:14px;height:13.8px;background:#f0f0f0;"></div>
<div style="left:8px;top:472px;width:1224px;height:1px;background:#a0a0a0;"></div>
<div style="left:8px;top:473px;width:1224px;height:1.5px;background:#e8e8e8;"></div>
<div style="left:8px;top:474.5px;width:1224px;height:54px;background:#fff8f0;"></div>
<span class="m" style="left:11.2px;top:477px;">edi=B34</span>
<span class="m" style="left:11.2px;top:505px;">.text:00436E6F 007310a11e7dfdb4fa9dd2e216f92cda9a1954c7be76a33aaf8028206a0c0258_unpacked_unmapped_noaslr.exe:$36E6F #36E6F</span>
<div style="left:1231px;top:89.7px;width:4px;height:439px;background:#f0f0f0;"></div>
<div style="left:1231.9px;top:89.7px;width:1px;height:439px;background:#a0a0a0;"></div>
<div style="left:1235px;top:89.7px;width:426.5px;height:439px;background:#f0f0f0;"></div>
<div style="left:1236px;top:90.3px;width:425px;height:18px;background:#e1e1e1;border:1px solid #adadad;box-sizing:border-box;"></div>
<span class="m" style="left:1423.5px;top:96px;">Hide FPU</span>
<div style="left:1235px;top:109.5px;width:414px;height:300.5px;background:#fff8f0;"></div>
<div style="left:1234.2px;top:109.5px;width:414.8px;height:1px;background:#a0a0a0;"></div>
<div style="left:1234.2px;top:109.5px;width:1px;height:300.5px;background:#a0a0a0;"></div>
<div class="clip" style="left:0px;top:0px;width:1647.5px;height:409.6px">
<span class="m" style="left:1241.2px;top:116px;">EAX   <i style="color:#ff0000;">00003330</i></span>
<span class="m" style="left:1241.2px;top:127px;">EBX   005B6190     "{\"v\":4,\"se\":true,\"ad\":false,\"vm\":false,\"ex\":[{\"en\":\"ejbalbakoplchlghecdalmeeeajnimhm\",\"ez\":\"MetaMask\"},{\"en\":\"aeblfdkhhhdcdjpifhhbdiojplfjncoa\"</span>
<span class="m" style="left:1241.2px;top:137px;">ECX   <i style="color:#ff0000;">00000B34</i></span>
<span class="m" style="left:1241.2px;top:147px;">EDX   <i style="color:#ff0000;">00000064</i>     'd'</span>
<span class="m" style="left:1241.2px;top:158px;">EBP   <i style="color:#ff0000;">00000057</i>     'W'</span>
<span class="m" style="left:1241.2px;top:168px;">ESP   0019F198     &amp;"P2WFe2ADGYmLNIPP4dkii4VSW1sBWGmNtNEbOUNyEPtER/NZWjc1q/hRofWVq1fuqXA6PyNiD+zYon4VYQR92Ccb3</span>
<span class="m" style="left:1241.2px;top:178px;">ESI   <i style="color:#ff0000;">005B61B0</i>     ":false,\"ex\":[{\"en\":\"ejbalbakoplchlghecdalmeeeajnimhm\",\"ez\":\"MetaMask\"},{\"en\":\"aeblfdkhhhdcdjpifhhbdiojplfjncoa\"</span>
<span class="m" style="left:1241.2px;top:189px;"><i style="text-decoration:underline;text-decoration-color:#a43c1e;text-decoration-thickness:1.3px;text-underline-offset:0.6px">EDI</i>   <i style="color:#ff0000;">00000B34</i></span>
<span class="m" style="left:1241.2px;top:209px;">EIP   <i style="color:#ff0000;">00436E6F</i>     007310a11e7dfdb4fa9dd2e216f92cda9a1954c7be76a33aaf8028206a0c0258_unpacked_unmapped_noaslr.</span>
<span class="m" style="left:1241.2px;top:230px;">EFLAGS   <i style="color:#ff0000;">00000283</i></span>
<span class="m" style="left:1241.2px;top:240px;"><i style="text-decoration:underline;text-decoration-color:#a43c1e;text-decoration-thickness:1.3px;text-underline-offset:0.6px">ZF</i> <i style="color:#ff0000;">0</i>  <i style="text-decoration:underline;text-decoration-color:#a43c1e;text-decoration-thickness:1.3px;text-underline-offset:0.6px">PF</i> <i style="color:#ff0000;">0</i>  AF 0</span>
<span class="m" style="left:1241.2px;top:251px;"><i style="text-decoration:underline;text-decoration-color:#a43c1e;text-decoration-thickness:1.3px;text-underline-offset:0.6px">OF</i> 0  <i style="text-decoration:underline;text-decoration-color:#a43c1e;text-decoration-thickness:1.3px;text-underline-offset:0.6px">SF</i> <i style="color:#ff0000;">1</i>  DF 0</span>
<span class="m" style="left:1241.2px;top:261px;"><i style="text-decoration:underline;text-decoration-color:#a43c1e;text-decoration-thickness:1.3px;text-underline-offset:0.6px">CF</i> <i style="color:#ff0000;">1</i>  TF <i style="color:#ff0000;">0</i>  IF 1</span>
<span class="m" style="left:1241.2px;top:282px;">LastError  00000000 (ERROR_SUCCESS)</span>
<span class="m" style="left:1241.2px;top:292px;">LastStatus C000007C (STATUS_NO_TOKEN)</span>
<span class="m" style="left:1241.2px;top:313px;">GS 002B  FS 0053</span>
<span class="m" style="left:1241.2px;top:323px;">ES 002B  DS 002B</span>
<span class="m" style="left:1241.2px;top:334px;">CS 0023  SS 002B</span>
<span class="m" style="left:1241.2px;top:354px;">ST(0) 00000000000000000000 x87r0 Empty 0.000000000000000000</span>
<span class="m" style="left:1241.2px;top:365px;">ST(1) 00000000000000000000 x87r1 Empty 0.000000000000000000</span>
<span class="m" style="left:1241.2px;top:375px;">ST(2) 00000000000000000000 x87r2 Empty 0.000000000000000000</span>
<span class="m" style="left:1241.2px;top:385px;">ST(3) 00000000000000000000 x87r3 Empty 0.000000000000000000</span>
<span class="m" style="left:1241.2px;top:396px;">ST(4) 00000000000000000000 x87r4 Empty 0.000000000000000000</span>
<span class="m" style="left:1241.2px;top:406px;">ST(5) 40058000000000000000 x87r5 Empty 64.00000000000000000</span>
</div>
<div style="left:1649px;top:110.5px;width:12.5px;height:299.5px;background:#f0f0f0;"></div>
<div style="left:1649.5px;top:124px;width:11.5px;height:83.5px;background:#cdcdcd;"></div>
<svg style="left:1650.25px;top:112.5px" width="10" height="10" viewBox="1650.25 112.5 10 10"><path d="M1652.25,119.1 L1655.25,115.9 L1658.25,119.1" fill="none" stroke="#505050" stroke-width="1.6"/></svg>
<svg style="left:1650.25px;top:398px" width="10" height="10" viewBox="1650.25 398 10 10"><path d="M1652.25,401.4 L1655.25,404.6 L1658.25,401.4" fill="none" stroke="#505050" stroke-width="1.6"/></svg>
<div style="left:1235px;top:410px;width:414px;height:13.7px;background:#f0f0f0;"></div>
<div style="left:1248.4px;top:410.5px;width:184.1px;height:12.7px;background:#cdcdcd;"></div>
<svg style="left:1237px;top:411.85px" width="10" height="10" viewBox="1237 411.85 10 10"><path d="M1243.6,413.85 L1240.4,416.85 L1243.6,419.85" fill="none" stroke="#505050" stroke-width="1.6"/></svg>
<svg style="left:1637px;top:411.85px" width="10" height="10" viewBox="1637 411.85 10 10"><path d="M1640.4,413.85 L1643.6,416.85 L1640.4,419.85" fill="none" stroke="#505050" stroke-width="1.6"/></svg>
<div style="left:1235px;top:425.5px;width:334.5px;height:16px;background:#e4e4e4;border:1px solid #b4b4b4;box-sizing:border-box;"></div>
<span class="s" style="left:1236.6px;top:427.6px;font-size:9.9px;color:#000;transform:scaleX(0.9481);">Default (stdcall)</span>
<svg style="left:1558.5px;top:431.5px" width="7" height="4" viewBox="0 0 7 4"><path d="M0,0 H7 L3.5,4 Z" fill="#000"/></svg>
<div style="left:1573px;top:425.5px;width:29.5px;height:16px;background:#fff;border:1px solid #8a8a8a;box-sizing:border-box;"></div>
<span class="s" style="left:1575.6px;top:427.3px;font-size:9.9px;color:#000;">5</span>
<svg style="left:1592.5px;top:428px" width="6" height="11" viewBox="0 0 6 11"><path d="M0.5,3.5 H5.5 L3,0.8 Z M0.5,7.5 H5.5 L3,10.2 Z" fill="#222"/></svg>
<div style="left:1606px;top:428px;width:11px;height:11px;background:#fff;border:1px solid #333;box-sizing:border-box;"></div>
<span class="s" style="left:1620.6px;top:427.3px;font-size:9.9px;color:#000;transform:scaleX(0.8844);">Unlocked</span>
<div style="left:1235px;top:443px;width:412.5px;height:85.3px;background:#fff8f0;"></div>
<div style="left:1234.2px;top:442.5px;width:426.8px;height:1px;background:#a0a0a0;"></div>
<div style="left:1234.2px;top:443px;width:1px;height:85.3px;background:#a0a0a0;"></div>
<div style="left:1236px;top:443.4px;width:411.5px;height:9px;background:#c0c0c0;"></div>
<div class="clip" style="left:0px;top:0px;width:1647px;height:528px">
<span class="m" style="left:1238.4px;top:445px;">1: [esp+4] 0000446C 0000446C</span>
<span class="m" style="left:1238.4px;top:455px;">2: [esp+8] 005B6190 005B6190 "{\"v\":4,\"se\":true,\"ad\":false,\"vm\":false,\"ex\":[{\"en\":\"ejbalbakoplchlghecdalmeeeajnimhm\",\"ez\":\"MetaMask\"},{\"en\":\"aeblfdkhhhdcdjpifhhbdiojplfjncoa\"</span>
<span class="m" style="left:1238.4px;top:464px;">3: [esp+C] 7B85653F 7B85653F</span>
<span class="m" style="left:1238.4px;top:474px;">4: [esp+10] 89190360 89190360</span>
<span class="m" style="left:1238.4px;top:483px;">5: [esp+14] CF83348B CF83348B</span>
</div>
<div style="left:1647.5px;top:443.2px;width:14px;height:85px;background:#f0f0f0;"></div>
<svg style="left:1649.5px;top:445.2px" width="10" height="10" viewBox="1649.5 445.2 10 10"><path d="M1651.5,451.8 L1654.5,448.6 L1657.5,451.8" fill="none" stroke="#c8c8c8" stroke-width="1.6"/></svg>
<svg style="left:1649.5px;top:516.2px" width="10" height="10" viewBox="1649.5 516.2 10 10"><path d="M1651.5,519.6 L1654.5,522.8 L1657.5,519.6" fill="none" stroke="#c8c8c8" stroke-width="1.6"/></svg>
<div style="left:8px;top:528.5px;width:1653.5px;height:2px;background:#f0f0f0;"></div>
<div style="left:8px;top:528.2px;width:1653.5px;height:1px;background:#a8a8a8;"></div>
<div style="left:8px;top:530px;width:1001px;height:22px;background:#f0f0f0;"></div>
<div style="left:74.5px;top:530.5px;width:71.5px;height:21.5px;background:#fff;"></div>
<div style="left:7.9px;top:532px;width:1px;height:18.5px;background:#dcdcdc;"></div>
<div style="left:74px;top:532px;width:1px;height:18.5px;background:#dcdcdc;"></div>
<div style="left:145.5px;top:532px;width:1px;height:18.5px;background:#dcdcdc;"></div>
<div style="left:212.3px;top:532px;width:1px;height:18.5px;background:#dcdcdc;"></div>
<div style="left:281.5px;top:532px;width:1px;height:18.5px;background:#dcdcdc;"></div>
<div style="left:351.2px;top:532px;width:1px;height:18.5px;background:#dcdcdc;"></div>
<div style="left:423px;top:532px;width:1px;height:18.5px;background:#dcdcdc;"></div>
<div style="left:485.5px;top:532px;width:1px;height:18.5px;background:#dcdcdc;"></div>
<div style="left:547.5px;top:532px;width:1px;height:18.5px;background:#dcdcdc;"></div>
<div style="left:8px;top:531.5px;width:540px;height:1px;background:#e2e2e2;"></div>
<div style="left:146px;top:550.5px;width:402px;height:1px;background:#dcdcdc;"></div>
<div style="left:8px;top:550.5px;width:66.5px;height:1px;background:#dcdcdc;"></div>
<svg style="left:16.5px;top:536.5px" width="14" height="11" viewBox="0 0 14 11"><rect x="3.6" y="0.4" width="10" height="7.6" rx="1" fill="#e4e4e6" stroke="#9a9aa2" stroke-width="0.6"/><path d="M6,1 V7.6 M8.4,1 V7.6 M10.8,1 V7.6" stroke="#b4b4bc" stroke-width="0.8"/><path d="M0.5,8 V3.4 Q0.5,2 2,2 H3.8 V8 Z" fill="#eaa23c"/><rect x="1" y="3" width="2" height="2.2" fill="#4a86d8"/><path d="M0.4,8.2 H13.6" stroke="#8a4a3a" stroke-width="1"/><circle cx="3.2" cy="9.3" r="1.5" fill="#3a3a3a"/><circle cx="11" cy="9.3" r="1.5" fill="#3a3a3a"/></svg>
<span class="s" style="left:33.5px;top:535.8px;font-size:9.9px;color:#000;transform:scaleX(0.9232);">Dump 1</span>
<svg style="left:85.5px;top:535.5px" width="14" height="11" viewBox="0 0 14 11"><rect x="3.6" y="0.4" width="10" height="7.6" rx="1" fill="#e4e4e6" stroke="#9a9aa2" stroke-width="0.6"/><path d="M6,1 V7.6 M8.4,1 V7.6 M10.8,1 V7.6" stroke="#b4b4bc" stroke-width="0.8"/><path d="M0.5,8 V3.4 Q0.5,2 2,2 H3.8 V8 Z" fill="#eaa23c"/><rect x="1" y="3" width="2" height="2.2" fill="#4a86d8"/><path d="M0.4,8.2 H13.6" stroke="#8a4a3a" stroke-width="1"/><circle cx="3.2" cy="9.3" r="1.5" fill="#3a3a3a"/><circle cx="11" cy="9.3" r="1.5" fill="#3a3a3a"/></svg>
<span class="s" style="left:102px;top:534.8px;font-size:9.9px;color:#000;transform:scaleX(0.9376);">Dump 2</span>
<svg style="left:154px;top:536.5px" width="14" height="11" viewBox="0 0 14 11"><rect x="3.6" y="0.4" width="10" height="7.6" rx="1" fill="#e4e4e6" stroke="#9a9aa2" stroke-width="0.6"/><path d="M6,1 V7.6 M8.4,1 V7.6 M10.8,1 V7.6" stroke="#b4b4bc" stroke-width="0.8"/><path d="M0.5,8 V3.4 Q0.5,2 2,2 H3.8 V8 Z" fill="#eaa23c"/><rect x="1" y="3" width="2" height="2.2" fill="#4a86d8"/><path d="M0.4,8.2 H13.6" stroke="#8a4a3a" stroke-width="1"/><circle cx="3.2" cy="9.3" r="1.5" fill="#3a3a3a"/><circle cx="11" cy="9.3" r="1.5" fill="#3a3a3a"/></svg>
<span class="s" style="left:171.5px;top:535.8px;font-size:9.9px;color:#000;transform:scaleX(0.9376);">Dump 3</span>
<svg style="left:223px;top:536.5px" width="14" height="11" viewBox="0 0 14 11"><rect x="3.6" y="0.4" width="10" height="7.6" rx="1" fill="#e4e4e6" stroke="#9a9aa2" stroke-width="0.6"/><path d="M6,1 V7.6 M8.4,1 V7.6 M10.8,1 V7.6" stroke="#b4b4bc" stroke-width="0.8"/><path d="M0.5,8 V3.4 Q0.5,2 2,2 H3.8 V8 Z" fill="#eaa23c"/><rect x="1" y="3" width="2" height="2.2" fill="#4a86d8"/><path d="M0.4,8.2 H13.6" stroke="#8a4a3a" stroke-width="1"/><circle cx="3.2" cy="9.3" r="1.5" fill="#3a3a3a"/><circle cx="11" cy="9.3" r="1.5" fill="#3a3a3a"/></svg>
<span class="s" style="left:240.5px;top:535.8px;font-size:9.9px;color:#000;transform:scaleX(0.9376);">Dump 4</span>
<svg style="left:292px;top:536.5px" width="14" height="11" viewBox="0 0 14 11"><rect x="3.6" y="0.4" width="10" height="7.6" rx="1" fill="#e4e4e6" stroke="#9a9aa2" stroke-width="0.6"/><path d="M6,1 V7.6 M8.4,1 V7.6 M10.8,1 V7.6" stroke="#b4b4bc" stroke-width="0.8"/><path d="M0.5,8 V3.4 Q0.5,2 2,2 H3.8 V8 Z" fill="#eaa23c"/><rect x="1" y="3" width="2" height="2.2" fill="#4a86d8"/><path d="M0.4,8.2 H13.6" stroke="#8a4a3a" stroke-width="1"/><circle cx="3.2" cy="9.3" r="1.5" fill="#3a3a3a"/><circle cx="11" cy="9.3" r="1.5" fill="#3a3a3a"/></svg>
<span class="s" style="left:309.5px;top:535.8px;font-size:9.9px;color:#000;transform:scaleX(0.9376);">Dump 5</span>
<svg style="left:361px;top:534.5px" width="12.5" height="12.5" viewBox="0 0 12.5 12.5"><circle cx="6.2" cy="6.8" r="5.2" fill="#e89a3c"/><path d="M1.2,4 L2,0.5 L4.8,2.6 Z M11.2,4 L10.4,0.5 L7.6,2.6 Z" fill="#e89a3c"/><ellipse cx="6.2" cy="8.6" rx="2.6" ry="2.2" fill="#fff2dc"/><circle cx="4.2" cy="5.8" r="0.8" fill="#222"/><circle cx="8.2" cy="5.8" r="0.8" fill="#222"/><circle cx="6.2" cy="8" r="0.7" fill="#222"/></svg>
<span class="s" style="left:378.5px;top:535.8px;font-size:9.9px;color:#000;transform:scaleX(0.9737);">Watch 1</span>
<span class="s" style="left:434px;top:535.8px;font-size:9px;color:#333;transform:scaleX(0.9487);font-style:italic;">[x=]</span>
<span class="s" style="left:450.5px;top:535.8px;font-size:9.9px;color:#000;transform:scaleX(0.9086);">Locals</span>
<svg style="left:498px;top:534px" width="10" height="15" viewBox="0 0 10 15"><path d="M2,5 Q2,1 5.5,1.2 Q9,1.6 8.4,5 Q7.8,8 4.6,8.6 Q3.6,9 3.6,10" fill="none" stroke="#e0453a" stroke-width="1.2"/><path d="M0.8,13.6 L4.6,7.4" stroke="#e0453a" stroke-width="1.1"/><circle cx="6" cy="4.4" r="1" fill="#e0453a"/></svg>
<span class="s" style="left:514px;top:535.8px;font-size:9.9px;color:#000;transform:scaleX(0.9669);">Struct</span>
<div style="left:8px;top:552px;width:985px;height:314px;background:#fff8f0;"></div>
<div style="left:8px;top:551.8px;width:985px;height:11.3px;background:#c0c0c0;"></div>
<div style="left:8px;top:550.8px;width:1001px;height:1px;background:#505050;"></div>
<div style="left:8px;top:562.7px;width:985px;height:0.8px;background:#808080;"></div>
<div style="left:62.1px;top:552px;width:1px;height:11.5px;background:#808080;"></div>
<div style="left:352.5px;top:552px;width:1px;height:11.5px;background:#808080;"></div>
<div style="left:455.5px;top:552px;width:1px;height:11.5px;background:#808080;"></div>
<div style="left:62.1px;top:563.5px;width:1px;height:302.5px;background:#808080;"></div>
<div style="left:352.5px;top:563.5px;width:1px;height:302.5px;background:#808080;"></div>
<div style="left:135.1px;top:563.5px;width:1px;height:302.5px;background:#909090;"></div>
<div style="left:207.5px;top:563.5px;width:1px;height:302.5px;background:#909090;"></div>
<div style="left:279.9px;top:563.5px;width:1px;height:302.5px;background:#909090;"></div>
<span class="m" style="left:11.5px;top:555px;">Address</span>
<span class="m" style="left:66.5px;top:555px;">Hex</span>
<span class="m" style="left:357.2px;top:555px;">ASCII</span>
<div style="left:63.3px;top:564.4px;width:17.5px;height:9.4px;background:#c0c0c0;"></div>
<div style="left:356.8px;top:564.4px;width:6.3px;height:9.4px;background:#c0c0c0;"></div>
<div class="clip" style="left:0px;top:564.35px;width:993px;height:301.65px">
<span class="m" style="left:11.5px;top:1.65px;">005B6190</span>
<span class="m" style="left:66.9px;top:1.65px;">7B 22 76 22 3A 34 2C 22 73 65 22 3A 74 72 75 65</span>
<span class="m" style="left:357.2px;top:1.65px;">{"v":4,"se":true</span>
<span class="m" style="left:11.5px;top:11.65px;">005B61A0</span>
<span class="m" style="left:66.9px;top:11.65px;">2C 22 61 64 22 3A 66 61 6C 73 65 2C 22 76 6D 22</span>
<span class="m" style="left:357.2px;top:11.65px;">,"ad":false,"vm"</span>
<span class="m" style="left:11.5px;top:20.65px;">005B61B0</span>
<span class="m" style="left:66.9px;top:20.65px;">3A 66 61 6C 73 65 2C 22 65 78 22 3A 5B 7B 22 65</span>
<span class="m" style="left:357.2px;top:20.65px;">:false,"ex":[{"e</span>
<span class="m" style="left:11.5px;top:30.65px;">005B61C0</span>
<span class="m" style="left:66.9px;top:30.65px;">6E 22 3A 22 65 6A 62 61 6C 62 61 6B 6F 70 6C 63</span>
<span class="m" style="left:357.2px;top:30.65px;">n":"ejbalbakoplc</span>
<span class="m" style="left:11.5px;top:39.65px;">005B61D0</span>
<span class="m" style="left:66.9px;top:39.65px;">68 6C 67 68 65 63 64 61 6C 6D 65 65 65 61 6A 6E</span>
<span class="m" style="left:357.2px;top:39.65px;">hlghecdalmeeeajn</span>
<span class="m" style="left:11.5px;top:49.65px;">005B61E0</span>
<span class="m" style="left:66.9px;top:49.65px;">69 6D 68 6D 22 2C 22 65 7A 22 3A 22 4D 65 74 61</span>
<span class="m" style="left:357.2px;top:49.65px;">imhm","ez":"Meta</span>
<span class="m" style="left:11.5px;top:58.65px;">005B61F0</span>
<span class="m" style="left:66.9px;top:58.65px;">4D 61 73 6B 22 7D 2C 7B 22 65 6E 22 3A 22 61 65</span>
<span class="m" style="left:357.2px;top:58.65px;">Mask"},{"en":"ae</span>
<span class="m" style="left:11.5px;top:68.65px;">005B6200</span>
<span class="m" style="left:66.9px;top:68.65px;">62 6C 66 64 6B 68 68 68 64 63 64 6A 70 69 66 68</span>
<span class="m" style="left:357.2px;top:68.65px;">blfdkhhhdcdjpifh</span>
<span class="m" style="left:11.5px;top:77.65px;">005B6210</span>
<span class="m" style="left:66.9px;top:77.65px;">68 62 64 69 6F 6A 70 6C 66 6A 6E 63 6F 61 22 2C</span>
<span class="m" style="left:357.2px;top:77.65px;">hbdiojplfjncoa",</span>
<span class="m" style="left:11.5px;top:87.65px;">005B6220</span>
<span class="m" style="left:66.9px;top:87.65px;">22 65 7A 22 3A 22 31 50 61 73 73 77 6F 72 64 22</span>
<span class="m" style="left:357.2px;top:87.65px;">"ez":"1Password"</span>
<span class="m" style="left:11.5px;top:96.65px;">005B6230</span>
<span class="m" style="left:66.9px;top:96.65px;">7D 2C 7B 22 65 6E 22 3A 22 6A 6E 6C 67 61 6D 65</span>
<span class="m" style="left:357.2px;top:96.65px;">},{"en":"jnlgame</span>
<span class="m" style="left:11.5px;top:106.6px;">005B6240</span>
<span class="m" style="left:66.9px;top:106.6px;">63 62 70 6D 62 61 6A 6A 66 68 6D 6D 6D 6C 68 65</span>
<span class="m" style="left:357.2px;top:106.6px;">cbpmbajjfhmmmlhe</span>
<span class="m" style="left:11.5px;top:115.6px;">005B6250</span>
<span class="m" style="left:66.9px;top:115.6px;">6A 6B 65 6D 65 6A 64 6D 61 22 2C 22 65 7A 22 3A</span>
<span class="m" style="left:357.2px;top:115.6px;">jkemejdma","ez":</span>
<span class="m" style="left:11.5px;top:125.6px;">005B6260</span>
<span class="m" style="left:66.9px;top:125.6px;">22 42 72 61 61 76 6F 73 22 7D 2C 7B 22 65 6E 22</span>
<span class="m" style="left:357.2px;top:125.6px;">"Braavos"},{"en"</span>
<span class="m" style="left:11.5px;top:134.6px;">005B6270</span>
<span class="m" style="left:66.9px;top:134.6px;">3A 22 64 6C 63 6F 62 70 6A 69 69 67 70 69 6B 6F</span>
<span class="m" style="left:357.2px;top:134.6px;">:"dlcobpjiigpiko</span>
<span class="m" style="left:11.5px;top:144.6px;">005B6280</span>
<span class="m" style="left:66.9px;top:144.6px;">6F 62 6F 68 6D 61 62 65 68 68 6D 68 66 6F 6F 64</span>
<span class="m" style="left:357.2px;top:144.6px;">obohmabehhmhfood</span>
<span class="m" style="left:11.5px;top:153.6px;">005B6290</span>
<span class="m" style="left:66.9px;top:153.6px;">62 62 22 2C 22 65 7A 22 3A 22 41 67 72 65 6E 74</span>
<span class="m" style="left:357.2px;top:153.6px;">bb","ez":"Agrent</span>
<span class="m" style="left:11.5px;top:163.6px;">005B62A0</span>
<span class="m" style="left:66.9px;top:163.6px;">20 58 22 7D 2C 7B 22 65 6E 22 3A 22 6A 67 61 61</span>
<span class="m" style="left:357.2px;top:163.6px;"> X"},{"en":"jgaa</span>
<span class="m" style="left:11.5px;top:172.6px;">005B62B0</span>
<span class="m" style="left:66.9px;top:172.6px;">69 6D 61 6A 69 70 62 70 64 6F 67 70 64 67 6C 68</span>
<span class="m" style="left:357.2px;top:172.6px;">imajipbpdogpdglh</span>
<span class="m" style="left:11.5px;top:182.6px;">005B62C0</span>
<span class="m" style="left:66.9px;top:182.6px;">61 70 68 6C 64 61 6B 69 6B 67 65 66 22 2C 22 65</span>
<span class="m" style="left:357.2px;top:182.6px;">aphldakikgef","e</span>
<span class="m" style="left:11.5px;top:191.6px;">005B62D0</span>
<span class="m" style="left:66.9px;top:191.6px;">7A 22 3A 22 43 6F 69 6E 68 75 62 22 7D 2C 7B 22</span>
<span class="m" style="left:357.2px;top:191.6px;">z":"Coinhub"},{"</span>
<span class="m" style="left:11.5px;top:201.6px;">005B62E0</span>
<span class="m" style="left:66.9px;top:201.6px;">65 6E 22 3A 22 66 63 66 63 66 6C 6C 66 6E 64 6C</span>
<span class="m" style="left:357.2px;top:201.6px;">en":"fcfcfllfndl</span>
<span class="m" style="left:11.5px;top:210.6px;">005B62F0</span>
<span class="m" style="left:66.9px;top:210.6px;">6F 6D 64 68 62 65 68 6A 6A 63 6F 69 6D 62 67 6F</span>
<span class="m" style="left:357.2px;top:210.6px;">omdhbehjjcoimbgo</span>
<span class="m" style="left:11.5px;top:220.6px;">005B6300</span>
<span class="m" style="left:66.9px;top:220.6px;">66 64 6E 63 67 22 2C 22 65 7A 22 3A 22 4C 65 61</span>
<span class="m" style="left:357.2px;top:220.6px;">fdncg","ez":"Lea</span>
<span class="m" style="left:11.5px;top:229.6px;">005B6310</span>
<span class="m" style="left:66.9px;top:229.6px;">70 20 57 61 6C 6C 65 74 22 7D 2C 7B 22 65 6E 22</span>
<span class="m" style="left:357.2px;top:229.6px;">p Wallet"},{"en"</span>
<span class="m" style="left:11.5px;top:239.6px;">005B6320</span>
<span class="m" style="left:66.9px;top:239.6px;">3A 22 6C 67 6D 70 63 70 67 6C 70 6E 67 64 6F 61</span>
<span class="m" style="left:357.2px;top:239.6px;">:"lgmpcpglpngdoa</span>
<span class="m" style="left:11.5px;top:248.6px;">005B6330</span>
<span class="m" style="left:66.9px;top:248.6px;">6C 62 67 65 6F 6C 64 65 61 6A 66 63 6C 6E 68 61</span>
<span class="m" style="left:357.2px;top:248.6px;">lbgeoldeajfclnha</span>
<span class="m" style="left:11.5px;top:258.6px;">005B6340</span>
<span class="m" style="left:66.9px;top:258.6px;">66 61 22 2C 22 65 7A 22 3A 22 53 61 66 65 70 61</span>
<span class="m" style="left:357.2px;top:258.6px;">fa","ez":"Safepa</span>
<span class="m" style="left:11.5px;top:267.6px;">005B6350</span>
<span class="m" style="left:66.9px;top:267.6px;">6C 22 7D 2C 7B 22 65 6E 22 3A 22 68 64 6F 6B 69</span>
<span class="m" style="left:357.2px;top:267.6px;">l"},{"en":"hdoki</span>
<span class="m" style="left:11.5px;top:277.6px;">005B6360</span>
<span class="m" style="left:66.9px;top:277.6px;">65 6A 6E 70 69 6D 61 6B 65 64 68 61 6A 68 64 6C</span>
<span class="m" style="left:357.2px;top:277.6px;">ejnpimakedhajhdl</span>
<span class="m" style="left:11.5px;top:286.6px;">005B6370</span>
<span class="m" style="left:66.9px;top:286.6px;">63 65 67 65 70 6C 69 6F 61 68 64 22 2C 22 65 7A</span>
<span class="m" style="left:357.2px;top:286.6px;">cegeplioahd","ez</span>
<span class="m" style="left:11.5px;top:296.6px;">005B6380</span>
<span class="m" style="left:66.9px;top:296.6px;">22 3A 22 4C 61 73 74 50 61 73 73 22 7D 2C 7B 22</span>
<span class="m" style="left:357.2px;top:296.6px;">":"LastPass"},{"</span>
</div>
<div style="left:283.66px;top:705.75px;width:67.385px;height:1.4px;background:#a01020;"></div>
<div style="left:283.66px;top:781.75px;width:67.385px;height:1.4px;background:#301030;"></div>
<div style="left:138.82px;top:857.75px;width:67.385px;height:1.4px;background:#a01020;"></div>
<div style="left:993px;top:552.5px;width:15px;height:313.5px;background:#f0f0f0;"></div>
<div style="left:993.5px;top:574px;width:14px;height:15px;background:#cdcdcd;"></div>
<svg style="left:995.5px;top:554.5px" width="10" height="10" viewBox="995.5 554.5 10 10"><path d="M997.5,561.1 L1000.5,557.9 L1003.5,561.1" fill="none" stroke="#505050" stroke-width="1.6"/></svg>
<svg style="left:995.5px;top:854px" width="10" height="10" viewBox="995.5 854 10 10"><path d="M997.5,857.4 L1000.5,860.6 L1003.5,857.4" fill="none" stroke="#505050" stroke-width="1.6"/></svg>
<div style="left:1008px;top:551px;width:1.4px;height:315px;background:#383838;"></div>
<div style="left:1010px;top:530px;width:637.5px;height:321.5px;background:#fff8f0;"></div>
<div style="left:1010px;top:530px;width:1px;height:321.5px;background:#a0a0a0;"></div>
<div style="left:1011px;top:530.75px;width:54px;height:9.5px;background:#000;"></div>
<div style="left:1011px;top:549.75px;width:636.5px;height:9.5px;background:#c0c0c0;"></div>
<div style="left:1064.7px;top:530px;width:1px;height:321.5px;background:#909090;"></div>
<div style="left:1121.7px;top:530px;width:1px;height:321.5px;background:#909090;"></div>
<div class="clip" style="left:0px;top:530.75px;width:1647.3px;height:320.55px">
<span class="m" style="left:1014.5px;top:2.25px;color:#fff;">0019F198</span>
<span class="m" style="left:1069.4px;top:2.25px;">005D1310</span>
<span class="m" style="left:1126.7px;top:2.25px;color:#000;">"P2WFe2ADGYmLNIPP4dkii4VSW1sBWGmNtNEbOUNyEPtER/NZWjc1q/hRofWVq1fuqXA6PyNiD+zYon4VYQR92Ccb3</span>
<span class="m" style="left:1014.5px;top:11.25px;color:#868686;">0019F19C</span>
<span class="m" style="left:1072.2px;top:11.25px;">0000446C</span>
<span class="m" style="left:1014.5px;top:21.25px;color:#000;">0019F1A0</span>
<span class="m" style="left:1072.2px;top:21.25px;">005B6190</span>
<span class="m" style="left:1126.7px;top:21.25px;color:#000;">"{\"v\":4,\"se\":true,\"ad\":false,\"vm\":false,\"ex\":[{\"en\":\"ejbalbakoplchlghecdalmeeeajnimhm\",\"ez\":\"MetaMask\"},{\"en\":\"aeblfdkhhhdcdjpifhhbdiojplfjncoa\"</span>
<span class="m" style="left:1014.5px;top:30.25px;color:#868686;">0019F1A4</span>
<span class="m" style="left:1072.2px;top:30.25px;">7B85653F</span>
<span class="m" style="left:1014.5px;top:40.25px;color:#868686;">0019F1A8</span>
<span class="m" style="left:1072.2px;top:40.25px;">89190360</span>
<span class="m" style="left:1014.5px;top:49.25px;color:#868686;">0019F1AC</span>
<span class="m" style="left:1072.2px;top:49.25px;">CF83348B</span>
<span class="m" style="left:1014.5px;top:59.25px;color:#868686;">0019F1B0</span>
<span class="m" style="left:1072.2px;top:59.25px;">8B22D9E1</span>
<span class="m" style="left:1014.5px;top:68.25px;color:#868686;">0019F1B4</span>
<span class="m" style="left:1072.2px;top:68.25px;">5B5B5285</span>
<span class="m" style="left:1014.5px;top:78.25px;color:#868686;">0019F1B8</span>
<span class="m" style="left:1072.2px;top:78.25px;">8D695801</span>
<span class="m" style="left:1014.5px;top:87.25px;color:#868686;">0019F1BC</span>
<span class="m" style="left:1072.2px;top:87.25px;">391BD1B4</span>
<span class="m" style="left:1014.5px;top:97.25px;color:#868686;">0019F1C0</span>
<span class="m" style="left:1072.2px;top:97.25px;">FB107243</span>
<span class="m" style="left:1014.5px;top:106.2px;color:#868686;">0019F1C4</span>
<span class="m" style="left:1072.2px;top:106.2px;">005B6190</span>
<span class="m" style="left:1126.7px;top:106.2px;color:#000;">"{\"v\":4,\"se\":true,\"ad\":false,\"vm\":false,\"ex\":[{\"en\":\"ejbalbakoplchlghecdalmeeeajnimhm\",\"ez\":\"MetaMask\"},{\"en\":\"aeblfdkhhhdcdjpifhhbdiojplfjncoa\"</span>
<span class="m" style="left:1014.5px;top:116.2px;color:#868686;">0019F1C8</span>
<span class="m" style="left:1072.2px;top:116.2px;">0019F398</span>
<span class="m" style="left:1126.7px;top:116.2px;color:#000;">L"C:\\Windows\\system32"</span>
<span class="m" style="left:1014.5px;top:125.2px;color:#868686;">0019F1CC</span>
<span class="m" style="left:1072.2px;top:125.2px;">005D1310</span>
<span class="m" style="left:1126.7px;top:125.2px;color:#000;">"P2WFe2ADGYmLNIPP4dkii4VSW1sBWGmNtNEbOUNyEPtER/NZWjc1q/hRofWVq1fuqXA6PyNiD+zYon4VYQR92Ccb3</span>
<span class="m" style="left:1014.5px;top:135.2px;color:#868686;">0019F1D0</span>
<span class="m" style="left:1072.2px;top:135.2px;">0019FF5C</span>
<span class="m" style="left:1014.5px;top:144.2px;color:#868686;">0019F1D4</span>
<span class="m" style="left:1072.2px;top:144.2px;">00410FC5</span>
<span class="m" style="left:1126.7px;top:144.2px;color:#ff0000;">return to 007310a11e7dfdb4fa9dd2e216f92cda9a1954c7be76a33aaf8028206a0c0258_unpacked_unmapped_noaslr.436E5A from ???</span>
<span class="m" style="left:1014.5px;top:154.2px;color:#868686;">0019F1D8</span>
<span class="m" style="left:1072.2px;top:154.2px;">005D1310</span>
<span class="m" style="left:1126.7px;top:154.2px;color:#000;">"P2WFe2ADGYmLNIPP4dkii4VSW1sBWGmNtNEbOUNyEPtER/NZWjc1q/hRofWVq1fuqXA6PyNiD+zYon4VYQR92Ccb3</span>
<span class="m" style="left:1014.5px;top:163.2px;color:#868686;">0019F1DC</span>
<span class="m" style="left:1072.2px;top:163.2px;">005B6190</span>
<span class="m" style="left:1126.7px;top:163.2px;color:#000;">"{\"v\":4,\"se\":true,\"ad\":false,\"vm\":false,\"ex\":[{\"en\":\"ejbalbakoplchlghecdalmeeeajnimhm\",\"ez\":\"MetaMask\"},{\"en\":\"aeblfdkhhhdcdjpifhhbdiojplfjncoa\"</span>
<span class="m" style="left:1014.5px;top:173.2px;color:#868686;">0019F1E0</span>
<span class="m" style="left:1072.2px;top:173.2px;">000000E2</span>
<span class="m" style="left:1014.5px;top:182.2px;color:#868686;">0019F1E4</span>
<span class="m" style="left:1072.2px;top:182.2px;">0019FC56</span>
<span class="m" style="left:1014.5px;top:192.2px;color:#868686;">0019F1E8</span>
<span class="m" style="left:1072.2px;top:192.2px;">0000002F</span>
<span class="m" style="left:1014.5px;top:201.2px;color:#868686;">0019F1EC</span>
<span class="m" style="left:1072.2px;top:201.2px;">00510270</span>
<span class="m" style="left:1126.7px;top:201.2px;color:#ff0000;">return to 00510270 from ???</span>
<span class="m" style="left:1014.5px;top:211.2px;color:#868686;">0019F1F0</span>
<span class="m" style="left:1072.2px;top:211.2px;">00510000</span>
<span class="m" style="left:1014.5px;top:220.2px;color:#868686;">0019F1F4</span>
<span class="m" style="left:1072.2px;top:220.2px;">0000007F</span>
<span class="m" style="left:1014.5px;top:230.2px;color:#868686;">0019F1F8</span>
<span class="m" style="left:1072.2px;top:230.2px;">00510298</span>
<span class="m" style="left:1014.5px;top:239.2px;color:#868686;">0019F1FC</span>
<span class="m" style="left:1072.2px;top:239.2px;">0000002F</span>
<span class="m" style="left:1014.5px;top:249.2px;color:#868686;">0019F200</span>
<span class="m" style="left:1072.2px;top:249.2px;">0000008C</span>
<span class="m" style="left:1014.5px;top:258.2px;color:#868686;">0019F204</span>
<span class="m" style="left:1072.2px;top:258.2px;">00510270</span>
<span class="m" style="left:1126.7px;top:258.2px;color:#ff0000;">return to 00510270 from ???</span>
<span class="m" style="left:1014.5px;top:268.2px;color:#868686;">0019F208</span>
<span class="m" style="left:1072.2px;top:268.2px;">00510000</span>
<span class="m" style="left:1014.5px;top:277.2px;color:#868686;">0019F20C</span>
<span class="m" style="left:1072.2px;top:277.2px;">005D1310</span>
<span class="m" style="left:1126.7px;top:277.2px;color:#000;">"P2WFe2ADGYmLNIPP4dkii4VSW1sBWGmNtNEbOUNyEPtER/NZWjc1q/hRofWVq1fuqXA6PyNiD+zYon4VYQR92Ccb3</span>
<span class="m" style="left:1014.5px;top:287.2px;color:#868686;">0019F210</span>
<span class="m" style="left:1072.2px;top:287.2px;">0055D1B0</span>
<span class="m" style="left:1014.5px;top:296.2px;color:#868686;">0019F214</span>
<span class="m" style="left:1072.2px;top:296.2px;">0000007F</span>
<span class="m" style="left:1014.5px;top:306.2px;color:#868686;">0019F218</span>
<span class="m" style="left:1072.2px;top:306.2px;">00510000</span>
<span class="m" style="left:1014.5px;top:315.2px;color:#868686;">0019F21C</span>
<span class="m" style="left:1072.2px;top:315.2px;">00000000</span>
</div>
<div style="left:1066.5px;top:541.25px;width:2.2px;height:52.25px;background:#4040ff;"></div>
<div style="left:1066.5px;top:541.25px;width:4.7px;height:1.4px;background:#4040ff;"></div>
<div style="left:1066.5px;top:592.1px;width:4.7px;height:1.4px;background:#4040ff;"></div>
<div style="left:1066.5px;top:598.65px;width:2.2px;height:252.65px;background:#000;"></div>
<div style="left:1066.5px;top:598.65px;width:4.7px;height:1.5px;background:#000;"></div>
<div style="left:1647.5px;top:530.5px;width:14px;height:320.8px;background:#f0f0f0;"></div>
<div style="left:1648px;top:780px;width:13px;height:16px;background:#cdcdcd;"></div>
<svg style="left:1649.5px;top:532.5px" width="10" height="10" viewBox="1649.5 532.5 10 10"><path d="M1651.5,539.1 L1654.5,535.9 L1657.5,539.1" fill="none" stroke="#505050" stroke-width="1.6"/></svg>
<svg style="left:1649.5px;top:839.3px" width="10" height="10" viewBox="1649.5 839.3 10 10"><path d="M1651.5,842.7 L1654.5,845.9 L1657.5,842.7" fill="none" stroke="#505050" stroke-width="1.6"/></svg>
<div style="left:1010px;top:851.3px;width:637.5px;height:13.8px;background:#f0f0f0;"></div>
<div style="left:1025.2px;top:851.8px;width:192.8px;height:12.8px;background:#cdcdcd;"></div>
<svg style="left:1012px;top:853.2px" width="10" height="10" viewBox="1012 853.2 10 10"><path d="M1018.6,855.2 L1015.4,858.2 L1018.6,861.2" fill="none" stroke="#505050" stroke-width="1.6"/></svg>
<svg style="left:1635.5px;top:853.2px" width="10" height="10" viewBox="1635.5 853.2 10 10"><path d="M1638.9,855.2 L1642.1,858.2 L1638.9,861.2" fill="none" stroke="#505050" stroke-width="1.6"/></svg>
<div style="left:1647.5px;top:851.3px;width:14px;height:13.8px;background:#f0f0f0;"></div>
<div style="left:8px;top:865.5px;width:1653.5px;height:1px;background:#a0a0a0;"></div>
<div style="left:8px;top:866.5px;width:1653.5px;height:19.5px;background:#f0f0f0;"></div>
<span class="s" style="left:8.6px;top:871px;font-size:9.9px;color:#000;transform:scaleX(0.8985);">Command:</span>
<div style="left:55px;top:868.5px;width:1542.5px;height:16px;background:#fff;border:1px solid #7a7a7a;border-bottom-color:#c8c8c8;border-right-color:#c8c8c8;box-sizing:border-box;"></div>
<div style="left:1597.8px;top:868.5px;width:63.2px;height:16px;background:#e1e1e1;border:1px solid #adadad;box-sizing:border-box;"></div>
<span class="s" style="left:1600.7px;top:870.6px;font-size:9.9px;color:#000;transform:scaleX(0.9883);">Default</span>
<svg style="left:1649.5px;top:875px" width="7" height="4" viewBox="0 0 7 4"><path d="M0,0 H7 L3.5,4 Z" fill="#000"/></svg>
<div style="left:7.5px;top:562.9px;width:449px;height:308.1px;background:#80ff80;mix-blend-mode:multiply;border-radius:0 3px 7px 7px"></div>
<div style="left:1237.4px;top:123px;width:408.5px;height:13.4px;background:#80ff80;mix-blend-mode:multiply;border-radius:6.7px"></div>
<div style="left:1071px;top:548.5px;width:580.5px;height:15.5px;background:#80ff80;mix-blend-mode:multiply;border-radius:7.7px"></div>
<svg style="left:460px;top:700px" width="180" height="80" viewBox="460 700 180 80"><g stroke="#fe0000" stroke-width="3.3" fill="none" stroke-linecap="round" stroke-linejoin="round"><path d="M629.5,766.6 L469.5,716.7"/><path d="M494.9,710.5 L469.5,716.7 L487,734.4"/></g></svg>
<span class="s" style="left:634.2px;top:759.5px;font-size:21px;color:#fe0000;transform:scaleX(1.0364);height:26px;line-height:26px;top:753.5px;">decrypted payload!!!</span>
</body></html>
